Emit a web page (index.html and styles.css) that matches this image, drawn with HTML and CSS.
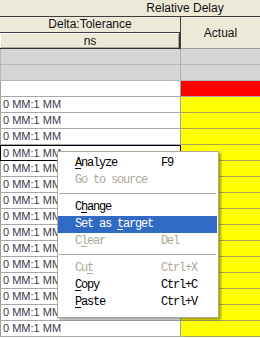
FILE: index.html
```html
<!doctype html>
<html lang="en">
  <head>
    <meta charset="utf-8" />
    <title>Relative Delay</title>
    <link rel="stylesheet" href="styles.css">
  </head>
  <body>
    <div class="grid">
      <div class="hdr-top">Relative Delay</div>
      <div class="hdr-mid">
        <div class="hdr-left">
          <div class="hdr-cell">Delta:Tolerance</div>
          <div class="hdr-btn">ns</div>
        </div>
        <div class="hdr-right">Actual</div>
      </div>

      <div class="row gray"><div class="cl"></div><div class="cr"></div></div>
      <div class="row gray"><div class="cl"></div><div class="cr"></div></div>
      <div class="row"><div class="cl"></div><div class="cr red"></div></div>

      <div class="row"><div class="cl">0 MM:1 MM</div><div class="cr yel"></div></div>
      <div class="row"><div class="cl">0 MM:1 MM</div><div class="cr yel"></div></div>
      <div class="row"><div class="cl">0 MM:1 MM</div><div class="cr yel"></div></div>
      <div class="row"><div class="cl sel">0 MM:1 MM</div><div class="cr yel"></div></div>
      <div class="row"><div class="cl">0 MM:1 MM</div><div class="cr yel"></div></div>
      <div class="row"><div class="cl">0 MM:1 MM</div><div class="cr yel"></div></div>
      <div class="row"><div class="cl">0 MM:1 MM</div><div class="cr yel"></div></div>
      <div class="row"><div class="cl">0 MM:1 MM</div><div class="cr yel"></div></div>
      <div class="row"><div class="cl">0 MM:1 MM</div><div class="cr yel"></div></div>
      <div class="row"><div class="cl">0 MM:1 MM</div><div class="cr yel"></div></div>
      <div class="row"><div class="cl">0 MM:1 MM</div><div class="cr yel"></div></div>
      <div class="row"><div class="cl">0 MM:1 MM</div><div class="cr yel"></div></div>
      <div class="row"><div class="cl">0 MM:1 MM</div><div class="cr yel"></div></div>
      <div class="row"><div class="cl">0 MM:1 MM</div><div class="cr yel"></div></div>
      <div class="row"><div class="cl">0 MM:1 MM</div><div class="cr yel"></div></div>
    </div>

    <!-- right click menu -->
    <div class="menu">
      <div class="mi"><span class="lbl"><u>A</u>nalyze</span><span class="key">F9</span></div>
      <div class="mi off"><span class="lbl">Go to source</span></div>
      <div class="sep"></div>
      <div class="mi"><span class="lbl">C<u>h</u>ange</span></div>
      <div class="mi hi"><span class="lbl">Set as <u>t</u>arget</span></div>
      <div class="mi off"><span class="lbl">C<u>l</u>ear</span><span class="key">Del</span></div>
      <div class="sep"></div>
      <div class="mi off"><span class="lbl">Cu<u>t</u></span><span class="key">Ctrl+X</span></div>
      <div class="mi"><span class="lbl"><u>C</u>opy</span><span class="key">Ctrl+C</span></div>
      <div class="mi"><span class="lbl"><u>P</u>aste</span><span class="key">Ctrl+V</span></div>
    </div>
  </body>
</html>
```

FILE: styles.css
```css
*{
  margin: 0;
  padding: 0;
  box-sizing: border-box;
}

body{
  position: relative;
  width: 260px;
  height: 338px;
  overflow: hidden;
  background-color: white;
  font-family: "Liberation Sans", Arial, sans-serif;
}

/* header */
.hdr-top{
  height: 17px;
  line-height: 16px;
  padding-left: 110px;
  text-align: center;
  font-size: 12px;
  color: #111111;
  background-color: #ece9d8;
  border-bottom: 1px solid #404040;
}

.hdr-mid{
  display: flex;
  height: 32px;
  background-color: #ece9d8;
  font-size: 12px;
  color: #111111;
}

.hdr-left{
  width: 181px;
  border-right: 1px solid #404040;
}

.hdr-cell{
  height: 16px;
  line-height: 15px;
  text-align: center;
  border-bottom: 1px solid #404040;
}

.hdr-btn{
  height: 16px;
  line-height: 14px;
  padding-top: 1px;
  text-align: center;
  box-shadow: inset -1px -1px 0 #303030, inset 1px 1px 0 #ffffff, inset -2px -2px 0 #aca899;
}

.hdr-right{
  flex: 1;
  display: flex;
  align-items: center;
  justify-content: center;
  border-bottom: 1px solid #9a9a9a;
}

/* rows */
.row{
  display: flex;
  height: 16px;
}

.cl{
  width: 181px;
  padding-left: 2px;
  font-size: 11px;
  line-height: 15px;
  color: #3a3a4c;
  border-left: 1px solid #a0a0a0;
  border-right: 1px solid #a0a0a0;
  border-bottom: 1px solid #a8a8a8;
  white-space: nowrap;
}

.cr{
  flex: 1;
  border-bottom: 1px solid #a8a8a8;
}

.gray .cl,
.gray .cr{
  background-color: #d5d5d5;
  border-bottom-color: #b8b8b8;
}

.gray .cl{
  border-left-color: #b8b8b8;
  border-right-color: #b0b0b0;
}

.red{
  background-color: #ff0000;
}

.yel{
  background-color: #ffff00;
  border-bottom-color: #aca64e;
}

.cl.sel{
  border: 1px solid #000000;
  line-height: 14px;
}

/* context menu */
.menu{
  position: absolute;
  left: 57px;
  top: 151px;
  width: 162px;
  padding: 3px 1px 6px 0;
  background-color: white;
  border: 1px solid #aca899;
  box-shadow: 2px 2px 2px rgba(0, 0, 0, 0.35);
  font-family: "Liberation Mono", "Courier New", monospace;
  font-size: 12px;
  letter-spacing: -1.2px;
  color: black;
}

.mi{
  display: flex;
  height: 17px;
  line-height: 17px;
  padding-left: 17px;
}

.mi .lbl{
  width: 86px;
  white-space: nowrap;
}

.mi u{
  text-underline-offset: 2px;
}

.off{
  color: #aca899;
}

.hi{
  background-color: #316ac5;
  color: white;
}

.sep{
  height: 10px;
  margin: 0 1px;
  background: linear-gradient(#fff 4px, #aca899 4px, #aca899 5px, #fff 5px);
}
```
